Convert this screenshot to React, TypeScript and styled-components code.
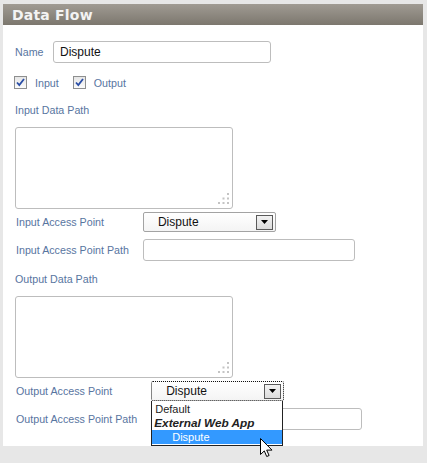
import React from 'react';
import styled, { createGlobalStyle } from 'styled-components';

const GlobalStyle = createGlobalStyle`
  html, body {
    margin: 0;
    padding: 0;
    background: #e7e7e7;
  }
  body {
    font-family: "Liberation Sans", Arial, sans-serif;
    font-size: 11px;
  }
`;

const Page = styled.div`
  width: 427px;
  height: 463px;
  padding: 4px 4px 0 3px;
  box-sizing: border-box;
  background: #e7e7e7;
`;

const Panel = styled.section`
  width: 420px;
  height: 442px;
  background: #fff;
`;

const Header = styled.header`
  height: 21px;
  display: flex;
  align-items: center;
  padding-left: 9px;
  background: linear-gradient(#a09b93, #7c776e);
  color: #f3f3f3;
  font-family: "DejaVu Sans", Verdana, sans-serif;
  font-weight: bold;
  font-size: 14px;
  letter-spacing: 0.2px;
`;

const Body = styled.div`
  padding: 16px 0 0 12px;
  display: flex;
  flex-direction: column;
`;

const Label = styled.span`
  color: #58759f;
  font-size: 10.7px;
  line-height: 14px;
  white-space: nowrap;
`;

const NameRow = styled.div`
  display: flex;
  align-items: center;
`;

const NameLabel = styled(Label)`
  width: 38px;
`;

const TextBox = styled.div<{ $width: number }>`
  width: ${p => p.$width}px;
  height: 22px;
  box-sizing: border-box;
  border: 1px solid #bdbdbd;
  border-radius: 3px;
  background: #fff;
  padding-left: 6px;
  display: flex;
  align-items: center;
  color: #111;
  font-size: 12px;
`;

const CheckRow = styled.div`
  display: flex;
  align-items: center;
  margin: 13px 0 0 -1px;
  height: 13px;
`;

const Check = styled.span`
  width: 13px;
  height: 13px;
  box-sizing: border-box;
  border: 1px solid #8e8f8f;
  background: linear-gradient(#e6e6e6, #fbfbfb);
  display: inline-flex;
  align-items: center;
  justify-content: center;
  margin-right: 8px;
`;

const CheckText = styled(Label)`
  margin-right: 14px;
`;

const SectionTitle = styled(Label)<{ $top: number }>`
  margin-top: ${p => p.$top}px;
`;

const Area = styled.div`
  position: relative;
  margin-top: 10px;
  width: 218px;
  height: 82px;
  box-sizing: border-box;
  border: 1px solid #bdbdbd;
  border-radius: 3px;
  background: #fff;
`;

const Grip = styled.svg`
  position: absolute;
  right: 2px;
  bottom: 4px;
`;

const FieldGrid = styled.div`
  display: grid;
  grid-template-columns: max-content max-content;
  column-gap: 14px;
  row-gap: 7px;
  align-items: center;
  margin-top: 3px;
  padding-left: 1px;
`;

const SelectWrap = styled.div`
  position: relative;
  width: 133px;
`;

const SelectBox = styled.div<{ $focused?: boolean }>`
  height: 20px;
  box-sizing: border-box;
  border: 1px ${p => (p.$focused ? 'dotted #111' : 'solid #a3a3a3')};
  border-radius: 2px;
  background: linear-gradient(#ffffff, #f4f4f4);
  display: flex;
  align-items: center;
  padding: 0 2px 0 14px;
  color: #111;
  font-size: 12px;
`;

const SelectText = styled.span`
  flex: 1;
`;

const ArrowBox = styled.span`
  width: 17px;
  height: 15px;
  box-sizing: border-box;
  border: 1px solid #5a5a5a;
  background: linear-gradient(#f2f2f2, #dcdcdc);
  display: flex;
  align-items: center;
  justify-content: center;
`;

const ListBox = styled.ul`
  position: absolute;
  top: 20px;
  left: 0;
  width: 132px;
  margin: 0;
  padding: 1px 0 1px;
  list-style: none;
  box-sizing: border-box;
  background: #fff;
  border: 1px solid #222;
  border-top: none;
  z-index: 2;
`;

const ListItem = styled.li<{ $group?: boolean; $selected?: boolean }>`
  height: 14px;
  line-height: 14px;
  font-size: ${p => (p.$group ? 11.8 : 11)}px;
  font-weight: ${p => (p.$group ? 'bold' : 'normal')};
  font-style: ${p => (p.$group ? 'italic' : 'normal')};
  padding-left: ${p => (p.$selected ? 20 : p.$group ? 2 : 3)}px;
  color: ${p => (p.$selected ? '#fff' : '#222')};
  background: ${p => (p.$selected ? '#3399ff' : 'transparent')};
`;

const Pointer = styled.svg`
  position: absolute;
  left: 109px;
  top: 57px;
  z-index: 3;
`;

const ArrowDown = () => (
  <svg width="7" height="4" viewBox="0 0 7 4">
    <path d="M0 0h7L3.5 4z" fill="#000" />
  </svg>
);

const CheckMark = () => (
  <svg width="9" height="9" viewBox="0 0 9 9">
    <path d="M1 4.5l2.3 2.6L8 1" fill="none" stroke="#2a4ea6" strokeWidth="1.8" />
  </svg>
);

const TextArea = () => (
  <Area>
    <Grip width="12" height="11" viewBox="0 0 12 11">
      <g fill="#c4c4c4">
        <rect x="9" y="0" width="2" height="2" />
        <rect x="4.5" y="4.5" width="2" height="2" />
        <rect x="9" y="4.5" width="2" height="2" />
        <rect x="0" y="9" width="2" height="2" />
        <rect x="4.5" y="9" width="2" height="2" />
        <rect x="9" y="9" width="2" height="2" />
      </g>
    </Grip>
  </Area>
);

const Select = ({ value, open }: { value: string; open?: boolean }) => (
  <SelectWrap>
    <SelectBox $focused={open}>
      <SelectText>{value}</SelectText>
      <ArrowBox>
        <ArrowDown />
      </ArrowBox>
    </SelectBox>
    {open && (
      <>
        <ListBox>
          <ListItem>Default</ListItem>
          <ListItem $group>External Web App</ListItem>
          <ListItem $selected>Dispute</ListItem>
        </ListBox>
        <Pointer width="13" height="20" viewBox="0 0 13 20">
          <path
            d="M0.5 0.5v16l3.8-3.6 2.4 5.6 2.4-1-2.4-5.4h5.3z"
            fill="#fff"
            stroke="#000"
            strokeWidth="1"
            strokeLinejoin="round"
          />
        </Pointer>
      </>
    )}
  </SelectWrap>
);

const App = () => (
  <>
    <GlobalStyle />
    <Page>
      <Panel>
        <Header>Data Flow</Header>
        <Body>
          <NameRow>
            <NameLabel>Name</NameLabel>
            <TextBox $width={218}>Dispute</TextBox>
          </NameRow>
          <CheckRow>
            <Check>
              <CheckMark />
            </Check>
            <CheckText>Input</CheckText>
            <Check>
              <CheckMark />
            </Check>
            <CheckText>Output</CheckText>
          </CheckRow>

          <SectionTitle $top={14}>Input Data Path</SectionTitle>
          <TextArea />
          <FieldGrid>
            <Label>Input Access Point</Label>
            <Select value="Dispute" />
            <Label>Input Access Point Path</Label>
            <TextBox $width={212} />
          </FieldGrid>

          <SectionTitle $top={11}>Output Data Path</SectionTitle>
          <TextArea />
          <FieldGrid>
            <Label>Output Access Point</Label>
            <Select value="Dispute" open />
            <Label>Output Access Point Path</Label>
            <TextBox $width={211} />
          </FieldGrid>
        </Body>
      </Panel>
    </Page>
  </>
);

export default App;
